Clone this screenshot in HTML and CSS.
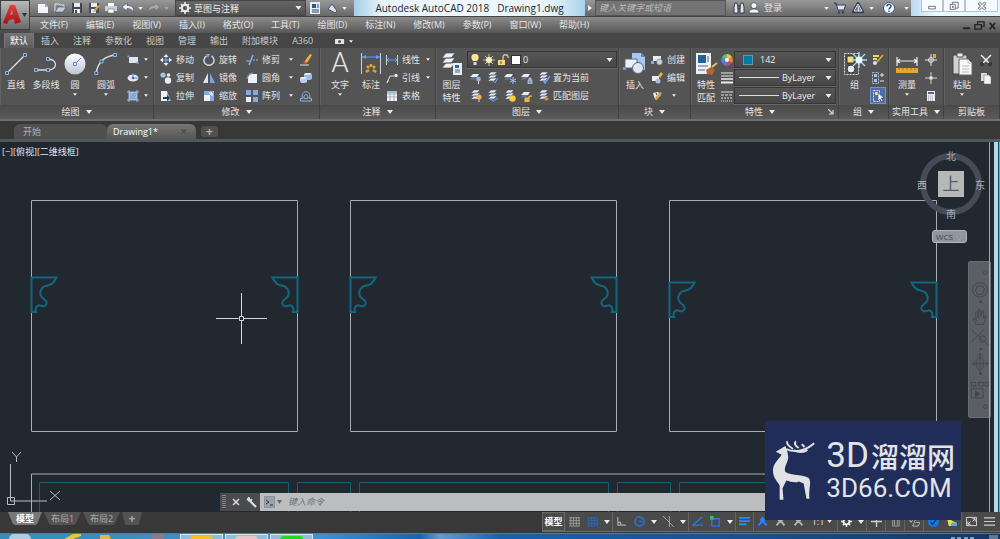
FILE: index.html
```html
<!DOCTYPE html>
<html lang="zh-CN">
<head>
<meta charset="utf-8">
<meta name="viewport" content="width=device-width, initial-scale=1">
<title>Autodesk AutoCAD 2018 - Drawing1.dwg</title>
<link rel="stylesheet" href="styles.css">
</head>
<body>
<svg class="sprite" aria-hidden="true">
  <defs>
    <linearGradient id="sphere" x1="0" y1="0" x2="0" y2="1"><stop offset="0" stop-color="#fff"/><stop offset="1" stop-color="#bcc5d2"/></linearGradient>
    <linearGradient id="red" x1="0" y1="0" x2="0" y2="1"><stop offset="0" stop-color="#e2403c"/><stop offset="1" stop-color="#a3121a"/></linearGradient>
    <path id="ornament" d="M0 .5H25C23 5 20 8 16 8.500C10 9.500 8 14 9 18C10 22 15 22 15.300 26C15 29 12 30 9 28.700C6 27.500 3 30 4.500 35H0Z"/>
  </defs>
  <symbol id="down" viewBox="0 0 6 4"><path d="M0 0h6L3 4z" fill="#eee"/></symbol>
  <symbol id="new" viewBox="0 0 12 12"><path d="M1 2h7l3 3v6H1z" fill="#f2f4f8"/><path d="M8 2v3h3z" fill="#aab"/></symbol>
  <symbol id="open" viewBox="0 0 12 12"><path d="M1 10V2h4l1 1h4v2" fill="none" stroke="#dce2ec"/><path d="M1 10l3-5h8l-3 5z" fill="#c3ccda" stroke="#33435c" stroke-width=".5"/></symbol>
  <symbol id="save" viewBox="0 0 12 12"><path d="M1 1h10v10H1z" fill="#3c4657"/><path d="M3 1h6v4H3zM3 7h6v4H3z" fill="#e7eaf0"/><path d="M4 8h2v3H4z" fill="#3c4657"/></symbol>
  <symbol id="saveas" viewBox="0 0 12 12"><path d="M1 1h10v10H1z" fill="#444e60"/><path d="M3 1h6v4H3zM3 7h5v4H3z" fill="#e7eaf0"/><path d="M5 9l5-6 1.500 1.500L7 10z" fill="#e5a337"/></symbol>
  <symbol id="print" viewBox="0 0 12 12"><path d="M3 1h6v3H3z" fill="#fff"/><path d="M0 4h12v5H0z" fill="#c9d0dc"/><path d="M3 7h6v4H3z" fill="#fff" stroke="#667" stroke-width=".6"/></symbol>
  <symbol id="undo" viewBox="0 0 12 12"><path d="M0 5l5-4v2.500c5 0 7 2 6.500 6.500C10 7.500 8 6.500 5 6.500V9z" fill="#eef2f8" stroke="#3a4458" stroke-width=".6"/></symbol>
  <symbol id="gear" viewBox="0 0 12 12"><circle cx="6" cy="6" r="3.200" fill="none" stroke="#eee" stroke-width="2"/><path d="M6 0v2.500M6 9.500V12M0 6h2.500M9.500 6H12M2 2l1.500 1.500M8.500 8.500L10 10M10 2L8.500 3.500M3.500 8.500L2 10" stroke="#eee" stroke-width="1.600"/></symbol>
  <symbol id="sheet" viewBox="0 0 12 12"><path d="M1 0h10v12H1z" fill="#e8edf5"/><path d="M3 2h4v4H3z" fill="#1f5e9e"/><path d="M8 3h2M8 5h2M3 8h7M3 10h7" stroke="#345"/></symbol>
  <symbol id="pen" viewBox="0 0 12 12"><path d="M2 7l4-5 5 7-2 2z" fill="#dfe5ee" stroke="#49546a"/></symbol>
  <symbol id="bino" viewBox="0 0 12 12"><path d="M1 11V5l1-4h2l1 4v6zM7 11V5l1-4h2l1 4v6zM5 4h2v3H5z" fill="#e4e8ef" stroke="#333d4f"/></symbol>
  <symbol id="user" viewBox="0 0 12 12"><circle cx="6" cy="3.600" r="3" fill="#f2f4f7" stroke="#39455a" stroke-width=".7"/><path d="M1 11c0-3 2-4 5-4s5 1 5 4z" fill="#f2f4f7" stroke="#39455a" stroke-width=".7"/></symbol>
  <symbol id="cart" viewBox="0 0 12 12"><path d="M0 1h2l2 7h6l1.500-5H3z" fill="#dce4ef" stroke="#34425a"/><circle cx="5" cy="10.500" r="1.200" fill="#34425a"/><circle cx="9" cy="10.500" r="1.200" fill="#34425a"/></symbol>
  <symbol id="a360" viewBox="0 0 12 12"><path d="M6 1L11 10H1z" fill="none" stroke="#33425b" stroke-width="2.500"/><path d="M6 2l4 7H2zM6 4l1 5" fill="none" stroke="#dfe8f4"/></symbol>
  <symbol id="help" viewBox="0 0 12 12"><circle cx="6" cy="6" r="5.500" fill="#fff" stroke="#345d94"/><path d="M4 4.500c0-3 4-2.500 4-.3C8 6 6 5.700 6 7.500M6 8.500V10" fill="none" stroke="#1d4d8c" stroke-width="1.400"/></symbol>
  <symbol id="camera" viewBox="0 0 12 8"><rect y="1" width="11" height="6" rx="1" fill="#e4e4e4"/><circle cx="5.500" cy="4" r="1.800" fill="#555"/></symbol>
  <symbol id="line" viewBox="0 0 24 24"><path d="M3 21L21 3" stroke="#ddd" stroke-width="1.300"/><path d="M1.500 19.500h3v3h-3zM19.500 1.500h3v3h-3z" fill="#40536e" stroke="#8fb4ea"/></symbol>
  <symbol id="pline" viewBox="0 0 24 24"><path d="M2 18h12c10 0 10-11 0-11" fill="none" stroke="#ddd" stroke-width="1.300"/><path d="M.5 16.500h3v3h-3zM12.500 16.500h3v3h-3zM12.500 5.500h3v3h-3z" fill="#40536e" stroke="#8fb4ea"/></symbol>
  <symbol id="circle" viewBox="0 0 24 24"><circle cx="12" cy="12" r="10.500" fill="url(#sphere)"/><path d="M12 12l6-6" stroke="#5a8bd8"/><path d="M10.500 10.500h3v3h-3z" fill="#eef" stroke="#5a8bd8"/></symbol>
  <symbol id="arc" viewBox="0 0 24 24"><path d="M2 21C4 10 10 4 22 3" fill="none" stroke="#ddd" stroke-width="1.300"/><path d="M.8 19.500h3v3h-3zM6 8h3v3H6zM19.500 1.500h3v3h-3z" fill="#40536e" stroke="#8fb4ea"/></symbol>
  <symbol id="rect" viewBox="0 0 12 12"><path d="M2 3h9v6H2z" fill="#dfe5ee"/><path d="M.5 1.500h2v2h-2zM9.500 8h2v2h-2z" fill="#6a9ae0"/></symbol>
  <symbol id="ellipse" viewBox="0 0 12 12"><ellipse cx="6" cy="6" rx="5.500" ry="3.500" fill="#e6eaf1"/><path d="M6 1v5h5" fill="none" stroke="#5c8edb"/><circle cx="6" cy="6" r="1.300" fill="#3668b5"/></symbol>
  <symbol id="hatch" viewBox="0 0 12 12"><path d="M2 2h8v8H2z" fill="#8fb2ea"/><path d="M2 0v12M10 0v12M0 2h12M0 10h12" stroke="#b9cbe8" stroke-width=".8"/><path d="M3 8l5-5M5 9l4-4" stroke="#547cbd" stroke-width=".6"/></symbol>
  <symbol id="move" viewBox="0 0 12 12"><path d="M6 0l2.500 3h-5zM6 12l2.500-3h-5zM0 6l3-2.500v5zM12 6L9 3.500v5z" fill="#e7ecf4"/><path d="M6 3v6M3 6h6" stroke="#6396e6" stroke-width="1.500"/></symbol>
  <symbol id="rotate" viewBox="0 0 12 12"><path d="M3.500 2A5 5 0 1 0 8.500 2" fill="none" stroke="#ccd4df" stroke-width="1.500"/><path d="M3 0h4L5 4z" fill="#77a5ec"/></symbol>
  <symbol id="trim" viewBox="0 0 12 12"><path d="M0 7h4M7 6h2M10 6h2" stroke="#9db4d4"/><path d="M3 11L7 1" stroke="#7fb0f4" stroke-width="1.500"/></symbol>
  <symbol id="erase" viewBox="0 0 12 12"><path d="M4 8L10 0l2 1-5 8z" fill="#eeaf43"/><path d="M3 8l3 3 1-2-2-2z" fill="#dc4b3b"/><path d="M0 11h9" stroke="#ddd"/></symbol>
  <symbol id="copy" viewBox="0 0 12 12"><circle cx="3" cy="3" r="2.600" fill="#a9c1e6"/><circle cx="8.500" cy="3" r="1.800" fill="#e8ecf2"/><circle cx="8" cy="8.500" r="3.200" fill="#e8ecf2"/></symbol>
  <symbol id="mirror" viewBox="0 0 12 12"><path d="M5 1v10H0z" fill="#dfe4ec"/><path d="M7 1v10h5z" fill="#7aa4df"/></symbol>
  <symbol id="fillet" viewBox="0 0 12 12"><path d="M2 11V7c0-4 2-5 5-5h4v9z" fill="#edf0f4"/><path d="M1 7c0-4 3-6 6-6" fill="none" stroke="#7aa8ed"/></symbol>
  <symbol id="solid" viewBox="0 0 12 12"><path d="M4 2l2-1h5l1 2v4l-2 1H7L4 6z" fill="#9dbbe5"/><path d="M4 2l2-1h5l-1 2H5z" fill="#dbe7f7"/><path d="M0 6l2-1h4l1 1v4l-2 1H1L0 9z" fill="#b7cdec"/><path d="M0 6l2-1h4L5 7H1z" fill="#e9f0fa"/></symbol>
  <symbol id="stretch" viewBox="0 0 12 12"><path d="M1 1h6v10H1z" fill="#edf0f5"/><path d="M7 1l4 10H7z" fill="#8db1e9"/><path d="M3 7h4V5l3 3-3 3V9H3z" fill="#203756"/></symbol>
  <symbol id="scale" viewBox="0 0 12 12"><path d="M1 1h10v10H1z" fill="#84aae3"/><path d="M1 5h6v6H1z" fill="#eef2f8"/><path d="M5 7l4-4M6 3h3v3" stroke="#fff" fill="none"/></symbol>
  <symbol id="array" viewBox="0 0 12 12"><path d="M0 0h5v5H0zM7 0h5v5H7zM7 7h5v5H7z" fill="#85aae2"/><path d="M0 7h5v5H0z" fill="#eef2f8"/></symbol>
  <symbol id="offset" viewBox="0 0 12 12"><path d="M.5 11h11V8.500H9.500c2.500-9-9.500-9-7 0H.5zM4 8.500c-1-5 5-5 4 0z" fill="none" stroke="#92aed8"/></symbol>
  <symbol id="dim" viewBox="0 0 24 24"><path d="M2.500 1v21M21.500 1v21" stroke="#ccd2da"/><path d="M3 5h18" stroke="#5c9bff"/><path d="M3 5l4-2v4zM21 5l-4-2v4z" fill="#5c9bff"/><path d="M7 20l3-2M17 20l-3-2M8 14l2 2M16 14l-2 2M12 12v3" stroke="#e5a32e" stroke-width="2.500"/></symbol>
  <symbol id="linear" viewBox="0 0 12 12"><path d="M.5 1v10M11.500 1v10" stroke="#ccd2da"/><path d="M1 6h10M3 4L1 6l2 2M9 4l2 2-2 2" fill="none" stroke="#5c9bff"/></symbol>
  <symbol id="leader" viewBox="0 0 12 12"><path d="M1 11L4 4h4" fill="none" stroke="#ddd"/><path d="M0 11l2-3 1 1z" fill="#ddd"/><circle cx="10" cy="3.500" r="1.700" fill="#eee"/></symbol>
  <symbol id="table" viewBox="0 0 12 12"><path d="M1 1h10v10H1z" fill="#f4f6f8"/><path d="M1 4h10M1 7h10M4 1v10M8 1v10" stroke="#8390a5" stroke-width=".7"/><path d="M1 1h10v2H1z" fill="#9eb7de"/></symbol>
  <symbol id="stack" viewBox="0 0 24 24"><path d="M2 6l4-5h9l-4 5zM2 11l4-5h9l-4 5zM2 16l4-5h9l-4 5z" fill="#eff1f4" stroke="#46505f" stroke-width=".7"/><path d="M13 11h9v12h-9z" fill="#e9eef6"/><path d="M15 13h4v3h-4z" fill="#2c66ac"/><path d="M15 18h5M15 20h5" stroke="#4c6079"/></symbol>
  <symbol id="bulb" viewBox="0 0 12 12"><path d="M6 0c-5 0-4 5-2 7h4c2-2 3-7-2-7z" fill="#ffe391"/><path d="M4.500 8h3v3h-3z" fill="#dadde2"/></symbol>
  <symbol id="sun" viewBox="0 0 12 12"><path d="M6 0v12M0 6h12M2 2l8 8M10 2l-8 8" stroke="#c9c6ae"/><circle cx="6" cy="6" r="3" fill="#fff0b0"/></symbol>
  <symbol id="lock" viewBox="0 0 12 12"><path d="M6 6V3c0-3 5-3 5 0v1" fill="none" stroke="#d8c77c" stroke-width="1.300"/><path d="M1 6h7v5H1z" fill="#f2d979"/><path d="M4 7v3" stroke="#705820"/></symbol>
  <symbol id="lay" viewBox="0 0 12 12"><path d="M0 5l3-3h6L7 5z" fill="#e9edf2"/><path d="M0 7.500L2 5h5L5 7.500z" fill="#647792"/></symbol>
  <symbol id="lays" viewBox="0 0 12 12"><path d="M1 3l3-3h6L7 3zM1 6l3-3h6L7 6zM1 9l3-3h6L7 9z" fill="#e9edf2" stroke="#4c607b" stroke-width=".6"/></symbol>
  <symbol id="insert" viewBox="0 0 24 24"><path d="M9 1h9l4 4v13H9z" fill="#a8c8f0"/><path d="M18 1v4h4z" fill="#5c86bb"/><path d="M2 7h12v9H2z" fill="#eef1f5" stroke="#5c6b80"/><circle cx="15" cy="16" r="5.500" fill="#dfe6ef" stroke="#5a6679"/><path d="M0 15h3v3H0z" fill="#5c9bff"/></symbol>
  <symbol id="create" viewBox="0 0 12 12"><path d="M2 2h8v5H2z" fill="#e6ecf5"/><circle cx="8.500" cy="8" r="3" fill="#c5cfde" stroke="#4f6078" stroke-width=".5"/><path d="M0 7h3v3H0z" fill="#7cabf1"/></symbol>
  <symbol id="edit" viewBox="0 0 12 12"><path d="M1 4h7v5H1z" fill="#e6ecf5"/><circle cx="7" cy="9" r="2.500" fill="#a9bddb"/><path d="M7 4l3-4 2 2-3 4z" fill="#e7ae42"/></symbol>
  <symbol id="attr" viewBox="0 0 12 12"><path d="M2 3c1 3 1 5 3 7l5-5-3-3z" fill="#e7eaee"/><path d="M4 8l5-6 2 1-5 7z" fill="#d9a13b"/><path d="M5 3l1 2" stroke="#333"/></symbol>
  <symbol id="match" viewBox="0 0 24 24"><path d="M2 1h15v21H2z" fill="#edf1f6"/><path d="M4 3h8v8H4z" fill="#245f9e"/><path d="M14 4v6M4 14h10M4 18h7" stroke="#55657a"/><path d="M12 18l5-3 4 3-3 5-5-1z" fill="#b26827"/><path d="M18 15l5-4" stroke="#e9c069" stroke-width="2"/></symbol>
  <symbol id="wheel" viewBox="0 0 12 12"><path d="M6 6V0a6 6 0 0 1 5 3z" fill="#f3c833"/><path d="M6 6l5-3a6 6 0 0 1 0 6z" fill="#ec8137"/><path d="M6 6l5 3a6 6 0 0 1-5 3z" fill="#d3405c"/><path d="M6 6v6a6 6 0 0 1-5-3z" fill="#7b63cf"/><path d="M6 6L1 9a6 6 0 0 1 0-6z" fill="#3e8fe0"/><path d="M6 6L1 3a6 6 0 0 1 5-3z" fill="#6bc060"/><circle cx="6" cy="6" r="2" fill="#f5f5f5"/></symbol>
  <symbol id="lweight" viewBox="0 0 12 12"><path d="M0 1h12M0 4h12" stroke="#eee"/><path d="M0 7h12" stroke="#eee" stroke-width="1.500"/><path d="M0 10.500h12" stroke="#eee" stroke-width="2"/></symbol>
  <symbol id="ltype" viewBox="0 0 12 12"><path d="M0 2h12" stroke="#ddd"/><path d="M0 5h12" stroke="#ddd" stroke-dasharray="3 1"/><path d="M0 8h12" stroke="#ddd" stroke-dasharray="2 1"/><path d="M0 11h12" stroke="#ddd" stroke-dasharray="1 1"/></symbol>
  <symbol id="group" viewBox="0 0 24 24"><path d="M1.500 1.500h14v21h-14z" fill="none" stroke="#ddd" stroke-dasharray="2 1"/><path d="M4 4h7v7H4z" fill="#f2e07b" stroke="#333"/><circle cx="8" cy="17" r="4" fill="#e8edf4" stroke="#333"/><path d="M16 0v16M8 8h16M10 2l12 12M22 2L10 14" stroke="#a7d8ff" stroke-width="1.400"/><circle cx="16" cy="8" r="3.500" fill="#eaf7ff"/></symbol>
  <symbol id="gedit" viewBox="0 0 12 12"><path d="M1 2h6M1 5h4" stroke="#eed878" stroke-width="2"/><circle cx="3" cy="9" r="2" fill="#d9e2ee"/><path d="M5 8l6-7" stroke="#e8a637" stroke-width="1.700"/></symbol>
  <symbol id="ungroup" viewBox="0 0 12 12"><path d="M.5.500h6v11h-6z" fill="none" stroke="#a8bad3" stroke-dasharray="2 1"/><path d="M2 2h3v3H2zM2 7h3v3H2z" fill="#a9c3e9"/><path d="M8 3h4M10 1v4M8 9h4" stroke="#e4e8ed"/></symbol>
  <symbol id="gsel" viewBox="0 0 12 12"><path d="M1.500.500h6v11h-6z" fill="none" stroke="#d1e0fb" stroke-dasharray="2 1"/><path d="M3 2h3v3H3z" fill="#f0df7f"/><path d="M6 3v8l2-2 2 3 1-1-2-3h3z" fill="#fff" stroke="#243d69" stroke-width=".5"/></symbol>
  <symbol id="measure" viewBox="0 0 24 24"><path d="M2 5v9M22 5v9M2 9h20M5 7L2 9l3 2M19 7l3 2-3 2" fill="none" stroke="#e8ebef" stroke-width="1.200"/><path d="M1 16h22v5H1z" fill="#e6a82d"/><path d="M4 16v2M8 16v2M12 16v2M16 16v2M20 16v2" stroke="#a9741c"/></symbol>
  <symbol id="idp" viewBox="0 0 12 12"><path d="M6 0v12M0 6h12" stroke="#e3e6eb"/><circle cx="6" cy="6" r="2.500" fill="none" stroke="#e3e6eb"/><path d="M8 0h3v4H8z" fill="#e6a847"/></symbol>
  <symbol id="point" viewBox="0 0 12 12"><path d="M6 0v12M0 6h12" stroke="#cbd2dc"/><path d="M4.500 4.500h3v3h-3z" fill="#e6e8ec"/></symbol>
  <symbol id="calc" viewBox="0 0 12 12"><path d="M2 1h8v10H2z" fill="#eef0f3"/><path d="M3 2h6v2H3z" fill="#576578"/><path d="M3 6h6M3 8h6M3 10h6" stroke="#7d8998" stroke-dasharray="1 1"/></symbol>
  <symbol id="paste" viewBox="0 0 24 24"><path d="M3 3h14v19H3z" fill="#cfd1d4" stroke="#424242"/><path d="M7 1h6v4H7z" fill="#e8e8e8" stroke="#555"/><path d="M9 7h9l4 4v12H9z" fill="#f7f7f7" stroke="#676767"/><path d="M18 7v4h4M12 14h7M12 17h7M12 20h7" fill="none" stroke="#b6bbc3"/></symbol>
  <symbol id="cut" viewBox="0 0 12 12"><path d="M1 1l8 8M11 1L3 9" stroke="#f3f3f3" stroke-width="1.500"/><circle cx="2" cy="10" r="1.500" fill="none" stroke="#222"/><circle cx="10" cy="10" r="1.500" fill="none" stroke="#222"/></symbol>
  <symbol id="cclip" viewBox="0 0 12 12"><path d="M1 1h6v8H1z" fill="#ddd"/><path d="M4 3h5l2 2v7H4z" fill="#f6f6f6" stroke="#666" stroke-width=".5"/></symbol>
  <symbol id="person" viewBox="0 0 14 14"><path d="M7 1v5L2 12M7 6l5 6M4 6l3-3 3 3" fill="none" stroke="currentColor" stroke-width="2.400"/></symbol>
</svg>

<div class="app">
  <header class="top">
    <button class="logo" aria-label="应用程序菜单">
      <svg width="18" height="22" viewBox="0 0 18 22"><path d="M0 19L7 1h5l6 17-6 2-1-5-5 1-2 4zM7 11l3-1-1-4z" fill="url(#red)"/></svg>
      <svg class="dark" width="5" height="4"><path d="M0 0h5L2.500 4z"/></svg>
    </button>
    <div class="titlebar">
      <div class="qat">
        <button aria-label="新建"><svg><use href="#new"/></svg></button>
        <button aria-label="打开"><svg><use href="#open"/></svg></button>
        <button aria-label="保存"><svg><use href="#save"/></svg></button>
        <button aria-label="另存为"><svg><use href="#saveas"/></svg></button>
        <button aria-label="打印"><svg><use href="#print"/></svg></button>
        <button aria-label="放弃"><svg><use href="#undo"/></svg></button>
        <button class="arrow" aria-label="放弃列表"><svg><use href="#down"/></svg></button>
        <button class="dim" aria-label="重做"><svg class="flip"><use href="#undo"/></svg></button>
        <button class="arrow dim" aria-label="重做列表"><svg><use href="#down"/></svg></button>
      </div>
      <div class="workspace"><svg><use href="#gear"/></svg><select aria-label="工作空间"><option>草图与注释</option></select><svg class="tri"><use href="#down"/></svg></div>
      <div class="qat tail">
        <button aria-label="图纸集"><svg><use href="#sheet"/></svg></button>
        <button aria-label="特性"><svg><use href="#pen"/></svg></button>
        <button class="arrow" aria-label="自定义"><svg><use href="#down"/></svg></button>
      </div>
      <h1 class="caption"><span>Autodesk AutoCAD 2018</span><span>Drawing1.dwg</span></h1>
      <button class="expand" aria-label="展开"><svg width="4" height="6"><path d="M0 0v6l4-3z" fill="#eee"/></svg></button>
      <input class="search" type="search" aria-label="搜索" placeholder="键入关键字或短语">
      <div class="account">
        <button aria-label="搜索"><svg><use href="#bino"/></svg></button>
        <button class="login"><svg><use href="#user"/></svg>登录</button>
        <button class="arrow" aria-label="登录菜单"><svg><use href="#down"/></svg></button>
        <button aria-label="应用商店"><svg><use href="#cart"/></svg></button>
        <button aria-label="保持连接"><svg><use href="#a360"/></svg></button>
        <button class="arrow" aria-label="连接菜单"><svg><use href="#down"/></svg></button>
        <button class="help" aria-label="帮助"><svg><use href="#help"/></svg></button>
        <button class="arrow" aria-label="帮助菜单"><svg><use href="#down"/></svg></button>
      </div>
      <div class="winctl">
        <button aria-label="最小化"><svg viewBox="0 0 12 12"><path d="M2 6.500h8v3H2z" fill="#fff" stroke="#555d68"/></svg></button>
        <button aria-label="还原"><svg viewBox="0 0 12 12"><path d="M4 1.500h7v7H4z" fill="#fff" stroke="#555d68"/><path d="M1.500 4h6v6h-6z" fill="#fff" stroke="#555d68"/><path d="M3.500 6h2v2h-2z" fill="#555d68"/></svg></button>
        <button class="wide" aria-label="关闭"><svg viewBox="0 0 12 12"><path d="M2 2l8 8M10 2l-8 8" stroke="#555d68" stroke-width="3.500"/><path d="M2.500 2.500l7 7M9.500 2.500l-7 7" stroke="#fff" stroke-width="1.700"/></svg></button>
      </div>
    </div>
    <nav class="menubar">
      <button>文件(F)</button><button>编辑(E)</button><button>视图(V)</button><button>插入(I)</button><button>格式(O)</button><button>工具(T)</button><button>绘图(D)</button><button>标注(N)</button><button>修改(M)</button><button>参数(P)</button><button>窗口(W)</button><button>帮助(H)</button>
      <div class="docctl">
        <button aria-label="最小化图形"><svg viewBox="0 0 12 12"><path d="M2 9h8" stroke="#222" stroke-width="2"/></svg></button>
        <button aria-label="还原图形"><svg viewBox="0 0 12 12"><path d="M4 4V2h7v5H9M1 5h7v5H1z" fill="none" stroke="#222" stroke-width="1.500"/></svg></button>
        <button aria-label="关闭图形"><svg viewBox="0 0 12 12"><path d="M3 3l6 7M9 3l-6 7" stroke="#222" stroke-width="1.800"/></svg></button>
      </div>
    </nav>
  </header>

  <nav class="tabs">
    <button class="on">默认</button><button>插入</button><button>注释</button><button>参数化</button><button>视图</button><button>管理</button><button>输出</button><button>附加模块</button><button>A360</button>
    <button class="cam" aria-label="功能区显示"><svg class="camera"><use href="#camera"/></svg><svg class="mini"><use href="#down"/></svg></button>
  </nav>

  <main class="ribbon">
    <section class="panel">
      <div class="body draw">
        <button class="big"><svg><use href="#line"/></svg>直线</button>
        <button class="big"><svg><use href="#pline"/></svg>多段线</button>
        <button class="big"><svg><use href="#circle"/></svg>圆<svg class="mini"><use href="#down"/></svg></button>
        <button class="big"><svg><use href="#arc"/></svg>圆弧<svg class="mini"><use href="#down"/></svg></button>
        <div class="rows">
          <button class="tool" aria-label="矩形"><svg><use href="#rect"/></svg><svg class="mini"><use href="#down"/></svg></button>
          <button class="tool" aria-label="椭圆"><svg><use href="#ellipse"/></svg><svg class="mini"><use href="#down"/></svg></button>
          <button class="tool" aria-label="图案填充"><svg><use href="#hatch"/></svg><svg class="mini"><use href="#down"/></svg></button>
        </div>
      </div>
      <h2>绘图<svg><use href="#down"/></svg></h2>
    </section>
    <section class="panel">
      <div class="body modify">
        <div class="rows"><button class="tool"><svg><use href="#move"/></svg>移动</button><button class="tool"><svg><use href="#copy"/></svg>复制</button><button class="tool"><svg><use href="#stretch"/></svg>拉伸</button></div>
        <div class="rows"><button class="tool"><svg><use href="#rotate"/></svg>旋转</button><button class="tool"><svg><use href="#mirror"/></svg>镜像</button><button class="tool"><svg><use href="#scale"/></svg>缩放</button></div>
        <div class="rows"><button class="tool"><svg><use href="#trim"/></svg>修剪<svg class="mini"><use href="#down"/></svg></button><button class="tool"><svg><use href="#fillet"/></svg>圆角<svg class="mini"><use href="#down"/></svg></button><button class="tool"><svg><use href="#array"/></svg>阵列<svg class="mini"><use href="#down"/></svg></button></div>
        <div class="rows"><button class="tool" aria-label="删除"><svg><use href="#erase"/></svg></button><button class="tool" aria-label="分解"><svg><use href="#solid"/></svg></button><button class="tool" aria-label="偏移"><svg><use href="#offset"/></svg></button></div>
      </div>
      <h2>修改<svg><use href="#down"/></svg></h2>
    </section>
    <section class="panel">
      <div class="body note">
        <button class="big"><span class="glyph">A</span>文字<svg class="mini"><use href="#down"/></svg></button>
        <button class="big"><svg><use href="#dim"/></svg>标注</button>
        <div class="rows"><button class="tool"><svg><use href="#linear"/></svg>线性<svg class="mini"><use href="#down"/></svg></button><button class="tool"><svg><use href="#leader"/></svg>引线<svg class="mini"><use href="#down"/></svg></button><button class="tool"><svg><use href="#table"/></svg>表格</button></div>
      </div>
      <h2>注释<svg><use href="#down"/></svg></h2>
    </section>
    <section class="panel">
      <div class="body layer">
        <button class="big"><svg><use href="#stack"/></svg>图层<br>特性</button>
        <div class="rows">
          <div class="combo"><svg><use href="#bulb"/></svg><svg><use href="#sun"/></svg><svg><use href="#lock"/></svg><i class="swatch white"></i><select aria-label="图层"><option>0</option></select><svg class="tri"><use href="#down"/></svg></div>
          <div class="strip">
            <button class="tool" aria-label="关"><svg viewBox="0 0 12 12"><use href="#lay" width="12" height="12"/><circle cx="8.500" cy="7" r="2.300" fill="#93b9ef"/><path d="M8.500 9v3" stroke="#ddd"/></svg></button>
            <button class="tool" aria-label="隔离"><svg viewBox="0 0 12 12"><use href="#lays" width="12" height="12"/><path d="M6 9l2 2 3-5" fill="none" stroke="#73a8f5"/></svg></button>
            <button class="tool" aria-label="冻结"><svg viewBox="0 0 12 12"><use href="#lay" width="12" height="12"/><path d="M9 5v7M6 7l6 3M12 7l-6 3" stroke="#9dc6fb"/></svg></button>
            <button class="tool" aria-label="锁定"><svg viewBox="0 0 12 12"><use href="#lay" width="12" height="12"/><path d="M7 8h4v4H7zM8 8V6h2v2" fill="#829ab8" stroke="#b8cdeb" stroke-width=".7"/></svg></button>
            <button class="tool text"><svg viewBox="0 0 12 12"><use href="#lays" width="12" height="12"/><path d="M5 8l2 3 5-7" fill="none" stroke="#6fa0e5" stroke-width="1.500"/></svg>置为当前</button>
          </div>
          <div class="strip">
            <button class="tool" aria-label="打开图层"><svg viewBox="0 0 12 12"><use href="#lays" width="12" height="12"/><circle cx="9" cy="7" r="2.500" fill="#f0b24c"/><path d="M9 9v3" stroke="#ddd"/></svg></button>
            <button class="tool" aria-label="取消隔离"><svg viewBox="0 0 12 12"><use href="#lays" width="12" height="12"/><path d="M3 9l3 2 5-3" fill="none" stroke="#4e84d6" stroke-width="1.800"/></svg></button>
            <button class="tool" aria-label="解冻"><svg viewBox="0 0 12 12"><use href="#lays" width="12" height="12"/><circle cx="8.500" cy="8.500" r="3.200" fill="#f5c944"/></svg></button>
            <button class="tool" aria-label="解锁"><svg viewBox="0 0 12 12"><use href="#lay" width="12" height="12"/><path d="M4 8h4v4H4zM8 8V6h3" fill="#e9b73e" stroke="#e9b73e"/></svg></button>
            <button class="tool text"><svg viewBox="0 0 12 12"><use href="#lays" width="12" height="12"/><path d="M5 8l3 3 3-2-2-2z" fill="#d4843b"/></svg>匹配图层</button>
          </div>
        </div>
      </div>
      <h2>图层<svg><use href="#down"/></svg></h2>
    </section>
    <section class="panel">
      <div class="body block">
        <button class="big"><svg><use href="#insert"/></svg>插入</button>
        <div class="rows"><button class="tool"><svg><use href="#create"/></svg>创建</button><button class="tool"><svg><use href="#edit"/></svg>编辑</button><button class="tool" aria-label="编辑属性"><svg><use href="#attr"/></svg><svg class="mini"><use href="#down"/></svg></button></div>
      </div>
      <h2>块<svg><use href="#down"/></svg></h2>
    </section>
    <section class="panel">
      <div class="body props">
        <button class="big"><svg><use href="#match"/></svg>特性<br>匹配</button>
        <div class="rows">
          <div class="prop"><svg><use href="#wheel"/></svg><div class="combo"><i class="swatch teal"></i><select aria-label="对象颜色"><option>142</option></select><svg class="tri"><use href="#down"/></svg></div></div>
          <div class="prop"><svg><use href="#lweight"/></svg><div class="combo"><i class="rule"></i><select class="fit" aria-label="线宽"><option>ByLayer</option></select><svg class="tri"><use href="#down"/></svg></div></div>
          <div class="prop"><svg><use href="#ltype"/></svg><div class="combo"><i class="rule"></i><select class="fit" aria-label="线型"><option>ByLayer</option></select><svg class="tri"><use href="#down"/></svg></div></div>
        </div>
      </div>
      <h2 class="launch"><span>特性</span><svg><use href="#down"/></svg><button aria-label="特性选项板"><svg viewBox="0 0 6 6"><path d="M0 0l4 4M5 1v4H1" fill="none" stroke="#ddd" stroke-width="1.200"/></svg></button></h2>
    </section>
    <section class="panel">
      <div class="body grp">
        <button class="big"><svg><use href="#group"/></svg>组</button>
        <div class="rows"><button class="tool" aria-label="组编辑"><svg><use href="#gedit"/></svg></button><button class="tool" aria-label="解除编组"><svg><use href="#ungroup"/></svg></button><button class="tool on" aria-label="组选择"><svg><use href="#gsel"/></svg></button></div>
      </div>
      <h2>组<svg><use href="#down"/></svg></h2>
    </section>
    <section class="panel">
      <div class="body util">
        <button class="big"><svg><use href="#measure"/></svg>测量<svg class="mini"><use href="#down"/></svg></button>
        <div class="rows"><button class="tool" aria-label="点坐标"><svg><use href="#idp"/></svg></button><button class="tool" aria-label="点样式"><svg><use href="#point"/></svg></button><button class="tool" aria-label="计算器"><svg><use href="#calc"/></svg></button></div>
      </div>
      <h2>实用工具<svg><use href="#down"/></svg></h2>
    </section>
    <section class="panel">
      <div class="body util">
        <button class="big"><svg><use href="#paste"/></svg>粘贴<svg class="mini"><use href="#down"/></svg></button>
        <div class="rows"><button class="tool" aria-label="剪切"><svg><use href="#cut"/></svg></button><button class="tool" aria-label="复制到剪贴板"><svg><use href="#cclip"/></svg></button></div>
      </div>
      <h2>剪贴板</h2>
    </section>
  </main>

  <nav class="files">
    <button class="file start">开始</button>
    <button class="file on">Drawing1*<span>✕</span></button>
    <button class="file add" aria-label="新图形">+</button>
  </nav>

  <div class="stage">
    <div class="canvas">
      <svg class="drawing" aria-hidden="true">
        <g transform="translate(0 -142)" fill="none">
          <g stroke="#a9adb3">
            <path d="M31.500 200.500h266v231h-266zM350.500 200.500h266v231h-266zM669.500 200.500h267v231h-267zM31.500 520v-46h905"/>
          </g>
          <path d="M39.500 520v-37.500h249V520M297.500 520v-37.500h53V520M359.500 520v-37.500h249V520M617.500 520v-37.500h53V520M679.500 520v-37.500h249" stroke="#156074"/>
          <g stroke="#12677f" stroke-width="2">
            <use href="#ornament" x="31.500" y="277"/><use href="#ornament" x="350.500" y="277"/><use href="#ornament" x="669.500" y="282"/>
            <use href="#ornament" transform="translate(297.500 277) scale(-1 1)"/><use href="#ornament" transform="translate(616.500 277) scale(-1 1)"/><use href="#ornament" transform="translate(936.500 282) scale(-1 1)"/>
          </g>
          <path d="M216 318.500h22.500M243.500 318.500H267M241.500 293v23M241.500 321v23M239.500 316.500h4v4h-4z" stroke="#d5d7da"/>
          <path d="M7.500 497.500h7v7h-7zM10.500 464v37H47M12 452l4.500 5 4.500-5M16.500 457v5M50 491l10 9M60 491l-10 9" stroke="#b9bcc1"/>
        </g>
      </svg>
      <div class="viewlabel">[−][俯视][二维线框]</div>
      <svg class="cube" width="70" height="76" viewBox="916 147 70 76">
        <circle cx="951" cy="184" r="28" fill="none" stroke="#454c57" stroke-width="6"/>
        <path d="M938 171h26v26h-26z" fill="#b5b7b9"/>
        <g text-anchor="middle" fill="#adb1b7" font-size="10"><text x="951" y="160">北</text><text x="951" y="218">南</text><text x="922" y="189">西</text><text x="980" y="189">东</text><text x="951" y="190" font-size="17" fill="#555c62">上</text></g>
      </svg>
      <button class="wcs">WCS <span>▽</span></button>
      <div class="navbar">
        <svg width="23" height="155" viewBox="968 261 23 155" fill="none" stroke="#41464c"><circle cx="986" cy="265" r="2"/><circle cx="980" cy="284" r="8"/><path d="M977 280h6l2 3-2 6h-6l-2-4z"/><path d="M979 297h3M979 349h3M979 376h3" stroke-width="2"/><path d="M976 322l-4-6 2-1 2 3-1-9 2-1 1 7V306h2l1 8 1-7h2v9l2-4 1 1-3 9zM971 328l15 14M985 327l-14 14"/><circle cx="983" cy="338" r="3.500"/><path d="M986 341l3 4M980 354v22M972 365h17M977 357l3-3 3 3M975 362l-3 3 3 3M986 362l3 3-3 3"/><ellipse cx="980" cy="365" rx="4" ry="7"/><path d="M970.500 385.500h5v4h-5zM978.500 385.500h5v4h-5zM985.500 385.500h4v4h-4zM970.500 392.500h13v10h-13z"/><path d="M975 395l5 3-5 3z" fill="#41464c"/><circle cx="986" cy="412" r="2"/></svg>
      </div>
      <div class="frameline"></div>
      <div class="command">
        <div class="grip"></div>
        <button aria-label="关闭命令行"><svg viewBox="0 0 12 12"><path d="M3 3l6 6M9 3L3 9" stroke="#ddd" stroke-width="1.500"/></svg></button>
        <button aria-label="自定义命令行"><svg viewBox="0 0 12 12"><path d="M3 4l7 7" stroke="#ddd" stroke-width="2.200"/><path d="M1 3c1 3 5 3 5 0L4 4 3 1z" fill="#ddd" stroke="#ddd"/></svg></button>
        <div class="entry">
          <svg class="prompt" width="18" height="12"><path d="M.5.500h10v11H.5z" fill="#9aa3ae" stroke="#8a929d"/><path d="M2 4l3 2-3 2M6 9h3" fill="none" stroke="#333"/><path d="M13 4h5l-2.500 4z" fill="#666"/></svg>
          <input type="text" aria-label="命令" placeholder="键入命令">
        </div>
      </div>
    </div>
    <div class="edge"></div>
  </div>

  <footer class="bottom">
    <div class="layouts"><button class="on">模型</button><button>布局1</button><button>布局2</button><button class="plus" aria-label="新建布局">+</button></div>
    <div class="status">
      <button class="model">模型</button>
      <button aria-label="栅格"><svg viewBox="0 0 12 12"><path d="M2 1v10M5 1v10M8 1v10M11 1v10M0 2h12M0 5h12M0 8h12M0 11h12" stroke="#aaa" stroke-width=".8"/></svg></button>
      <button aria-label="捕捉"><svg viewBox="0 0 12 12"><path d="M2 1v10M5 1v10M8 1v10M11 1v10M0 2h12M0 5h12M0 8h12M0 11h12" stroke="#2869ba"/></svg></button>
      <button class="drop" aria-label="捕捉选项"><svg><use href="#down"/></svg></button>
      <button class="sep" aria-label="正交"><svg viewBox="0 0 12 12"><path d="M2 1v9h9M2 7h3v3" fill="none" stroke="#aaa" stroke-width="1.300"/></svg></button>
      <button aria-label="极轴"><svg viewBox="0 0 12 12"><circle cx="6" cy="6" r="5" fill="none" stroke="#2a6fd0" stroke-width="1.800"/><path d="M6 6h6M6 6l3-4" stroke="#2a6fd0"/></svg></button>
      <button class="drop" aria-label="极轴选项"><svg><use href="#down"/></svg></button>
      <button aria-label="等轴测"><svg viewBox="0 0 12 12"><path d="M0 0l12 12M7 0v12" stroke="#aaa"/></svg></button>
      <button class="drop" aria-label="等轴测选项"><svg><use href="#down"/></svg></button>
      <button class="sep" aria-label="对象追踪"><svg viewBox="0 0 12 12"><path d="M11 1L1 10h11" fill="none" stroke="#2777e6" stroke-width="1.500"/></svg></button>
      <button aria-label="对象捕捉"><svg viewBox="0 0 12 12"><path d="M2 3h8v8H2z" fill="none" stroke="#2777e6" stroke-width="1.500"/><path d="M0 0h4v4H0z" fill="#2ec050"/></svg></button>
      <button class="drop" aria-label="捕捉设置"><svg><use href="#down"/></svg></button>
      <button class="sep" aria-label="线宽显示"><svg viewBox="0 0 12 12"><path d="M0 2h12M0 5.500h12M0 9h8" stroke="#2f86fa" stroke-width="2"/></svg></button>
      <button class="sep blue" aria-label="注释可见性"><svg><use href="#person"/></svg></button>
      <button class="gray" aria-label="自动缩放"><svg><use href="#person"/></svg></button>
      <button class="gray" aria-label="注释比例"><svg><use href="#person"/></svg></button>
      <button class="ratio">1:1<svg class="mini"><use href="#down"/></svg></button>
      <button class="sep" aria-label="切换工作空间"><svg><use href="#gear"/></svg></button>
      <button class="drop" aria-label="工作空间列表"><svg><use href="#down"/></svg></button>
      <button class="sep far" aria-label="注释监视器"><svg viewBox="0 0 12 12"><path d="M6 0v12M0 6h12" stroke="#ccc" stroke-width="1.500"/></svg></button>
      <button class="sep far" aria-label="隔离对象"><svg viewBox="0 0 12 12"><path d="M3 2h7v9H3zM5 4v6M8 4v6" fill="none" stroke="#aaa"/></svg></button>
      <button class="sep far" aria-label="系统变量"><svg viewBox="0 0 12 12"><path d="M0 3h5l-3 4zM7 7h5l-2 4H4l3-7h4" fill="none" stroke="#bbb"/></svg></button>
      <button class="sep far" aria-label="硬件加速"><svg viewBox="0 0 12 12"><circle cx="6" cy="6" r="6" fill="#1677e5"/><path d="M3 7l2 2 4-5" fill="none" stroke="#103a75" stroke-width="1.500"/></svg></button>
      <button class="far" aria-label="性能"><svg viewBox="0 0 12 12"><path d="M1 2l5-1v4l5 2-2 4H3z" fill="#dde05b"/><path d="M6 7h6v4H5z" fill="#5ba4df"/></svg></button>
      <button class="sep far" aria-label="全屏显示"><svg viewBox="0 0 12 12"><path d="M.5 1.500h11v9H.5z" fill="none" stroke="#ddd"/><path d="M7 3h3v3M10 3L7 6M5 9H2V6M2 9l3-3" fill="none" stroke="#ddd"/></svg></button>
      <button class="far" aria-label="自定义"><svg viewBox="0 0 12 12"><path d="M0 2h12M0 6h12M0 10h12" stroke="#ccc" stroke-width="1.200"/></svg></button>
    </div>
  </footer>

  <div class="taskbar" aria-hidden="true">
    <i class="orb"></i>
    <svg class="quick" width="110" height="5"><path d="M2 5l9-5h8v2l-8 3z" fill="#e3c838"/><path d="M38 1h9l2 4H38z" fill="#e4b743"/><path d="M90 0h12v5H90z" fill="#8b7a8c"/></svg>
    <i class="task"><b class="yellow"></b></i><i class="task"><b class="rose"></b></i><i class="task"><b class="green"></b></i>
    <svg class="clock" width="50" height="5"><path d="M1 4h4M7 4h4M14 4h4M20 4h4" stroke="#fff"/><path d="M39 1h9v4h-9z" fill="#66798f"/></svg>
  </div>

  <aside class="brand">
    <svg width="46" height="62" viewBox="0 0 48 62" aria-hidden="true"><path d="M4 11L14 5l2 5 1 7c-1 7-5 10-3 15 7 4 15 2 24 6 4 4 0 11 1 22h-3l-3-16-5-2c-4 2-9 0-13-1l-4 8 1 12H8V46C5 41 1 38 1 30c0-7 7-12 9-16z" fill="#e1e2e5"/><path d="M15 8c7 4 19 3 29-6M22 8c-5-3-7-6-6-8M28 7c-4-2-5-5-3-7M23 9c4 3 10 3 14 0M34 6l-3-3" fill="none" stroke="#e1e2e5" stroke-width="2"/></svg>
    <div><p class="name"><b>3D</b>溜溜网</p><p class="site">3D66.COM</p></div>
  </aside>
</div>
</body>
</html>
```
FILE: styles.css
```css
* { box-sizing: border-box; }
body { margin: 0; background: #383838; }
.app, button, input, select { font-family: "Open Sans", "Noto Sans CJK SC", sans-serif; font-size: 9px; line-height: 12px; color: #e4e4e4; }
.app { position: relative; display: flex; flex-direction: column; height: 100vh; overflow: hidden; }
button { display: flex; align-items: center; justify-content: center; flex: none; margin: 0; padding: 0; border: 0; background: none; white-space: nowrap; }
select { appearance: none; flex: 1; min-width: 0; height: 13px; padding: 0; border: 0; background: none; color: #eee; line-height: 13px; }
h1, h2, p { margin: 0; font-weight: 400; }
svg { flex: none; display: block; }
button svg, .combo svg, .prop > svg, .workspace svg { width: 12px; height: 12px; }
.sprite { position: absolute; width: 0; height: 0; }
button .mini { width: 4px; height: 3px; }
.tri.tri { width: 7px; height: 4px; }

.top { display: grid; grid-template-columns: 30px 1fr; background: linear-gradient(#7b7b7b, #4b4b4b); flex: none; }
.logo { grid-row: span 2; height: 30px; gap: 1px; align-items: center; border: 1px solid #3f3f3f; background: linear-gradient(#b9b9b9, #6a6a6a); }
.logo svg { width: 18px; height: 22px; }
.logo .dark { width: 5px; height: 4px; fill: #333; }
.titlebar { display: flex; height: 17px; min-width: 0; background: linear-gradient(#989898, #686868); border-bottom: 1px solid #444; }
.qat { display: flex; align-items: center; padding-left: 4px; }
.qat button { width: 17px; }
.account button { width: 18px; }
.qat .arrow, .account .arrow { width: 9px; }
.arrow svg { width: 5px; height: 3px; }
.dim { opacity: .35; }
.flip { transform: scaleX(-1); }
.workspace { display: flex; align-items: center; gap: 3px; width: 131px; margin-left: 4px; padding: 0 3px; border: 1px solid #444; background: linear-gradient(#666, #515151); }
.tail { padding-left: 0; width: 48px; }
.caption { flex: 1; display: flex; align-items: center; justify-content: center; gap: 8px; min-width: 0; color: #20272e; font-size: 10px; white-space: nowrap; background: linear-gradient(90deg, #a6cfe9, #e6f4fb 12%, #f0f8fc 50%, #e6f4fb 85%, #a9d1ea); }
.expand { width: 10px; }
.expand svg { width: 4px; height: 6px; }
.search { width: 131px; padding: 0 3px; border: 1px solid #555; background: #737373; font-style: italic; }
.search::placeholder { color: #b9b9b9; opacity: 1; }
.account { display: flex; align-items: center; flex: none; padding-left: 4px; }
.account .login { width: 74px; justify-content: flex-start; gap: 4px; }
.account .help { width: 26px; }
.winctl { display: flex; justify-content: center; width: 89px; padding: 0 2px 4px 10px; background: linear-gradient(90deg, #b9dbf0, #eefaff 30%, #e3f6fd); }
.winctl button { width: 22px; border: 1px solid #b7c5d0; border-top: 0; background: #f5fbfe; }
.winctl button svg { width: 10px; height: 10px; }
.winctl .wide { width: 33px; }
.menubar { display: flex; align-items: center; gap: 18px; height: 16px; padding-left: 10px; background: linear-gradient(#8b8b8b, #575757); }
.docctl { display: flex; gap: 2px; margin: 0 2px 0 auto; }
.docctl svg { width: 11px; height: 11px; }

.tabs { display: flex; flex: none; height: 15px; padding-left: 4px; background: #464646; }
.tabs button { padding: 1px 7px 0; color: #c9c9c9; }
.tabs .on { border: 1px solid #767676; border-bottom: 0; background: linear-gradient(#737373, #5b5b5b); color: #fff; padding: 0 5px; }
.tabs .cam { margin-left: 8px; gap: 4px; }
.tabs .camera { width: 10px; height: 7px; }

.ribbon { display: grid; grid-template-columns: 154fr 166fr 116fr 183fr 72fr 148fr 50fr 55fr 56fr; flex: none; height: 73px; border-bottom: 2px solid #6d6d6d; background: #545454; }
.panel { display: flex; flex-direction: column; min-width: 0; border-right: 1px solid #414141; box-shadow: inset 1px 0 #626262; }
.panel h2 { display: flex; align-items: center; justify-content: center; gap: 6px; height: 14px; font-size: 9px; line-height: 12px; background: linear-gradient(#4b4b4b, #5a5a5a); white-space: nowrap; }
.panel h2 svg { width: 6px; height: 4px; }
.panel .launch { padding-left: 54px; justify-content: flex-start; }
.launch button { margin: 0 4px 0 auto; }
.panel .launch button svg { height: 6px; }
.body { flex: 1; display: grid; align-items: start; padding-top: 3px; }
.big { flex-direction: column; padding-top: 1px; line-height: 13px; }
.big > svg:first-child { width: 24px; height: 24px; margin-bottom: 2px; }
.big .mini { margin-top: 2px; }
.glyph { height: 22px; margin-bottom: 4px; font: 300 28px/22px Roboto, sans-serif; }
.rows { display: grid; grid-auto-rows: 17px; gap: 1px; min-width: 0; }
.tool { justify-content: flex-start; gap: 4px; }
.tool .mini { margin-left: 5px; }
.draw { grid-template-columns: 32px 28px 30px 32px 1fr; }
.draw .rows { padding-left: 5px; }
.draw .tool .mini { margin-left: 1px; }
.modify { grid-template-columns: 43px 43px 54px 1fr; padding-left: 6px; }
.note { grid-template-columns: 32px 30px 1fr; padding-left: 4px; }
.note .tool .mini { margin-left: 2px; }
.layer { grid-template-columns: 29px 1fr; padding: 3px 1px 0 1px; }
.layer .rows { padding-left: 1px; }
.combo { display: flex; align-items: center; gap: 3px; min-width: 0; flex: 1; padding: 0 3px 0 4px; border: 1px solid #373737; background: linear-gradient(#565656, #484848); box-shadow: 0 1px #686868; }
.layer .combo { gap: 2px; padding-left: 1px; }
.swatch { width: 10px; height: 10px; border: 1px solid #333; flex: none; }
.white { background: #fff; }
.teal { background: #007ba5; margin: 0 4px; border-color: #5c9aae; }
.strip { display: flex; gap: 5px; padding-left: 3px; }
.strip .text { gap: 3px; }
.block { grid-template-columns: 32px 1fr; }
.props { grid-template-columns: 30px 1fr; padding-right: 2px; }
.prop { display: flex; gap: 1px; align-items: center; }
.props .combo { align-self: stretch; }
.rule { flex: 1; height: 1px; background: #ddd; }
.props .fit { flex: none; width: 34px; margin-right: 6px; }
.grp { grid-template-columns: 31px 1fr; }
.grp .tool { width: 16px; justify-content: center; }
.grp .on { background: #4f6ca7; border: 1px solid #7792ca; }
.util { grid-template-columns: 36px 1fr; }

.files { display: flex; align-items: end; flex: none; height: 21px; padding-left: 14px; border-bottom: 3px solid #53575b; background: #383838; }
.file { height: 15px; border-radius: 6px 6px 0 0; background: #505050; color: #aeaeae; }
.start { width: 93px; padding-left: 9px; justify-content: flex-start; }
.files .on { justify-content: space-between; width: 89px; padding: 0 8px 0 6px; color: #fff; background: linear-gradient(#777, #565656); }
.file span { color: #444; }
.add { width: 17px; height: 11px; margin: 0 0 2px 5px; border-radius: 3px; font-weight: 700; font-size: 12px; }

.stage { flex: 1; display: flex; min-height: 0; }
.canvas { position: relative; flex: 1; min-width: 0; overflow: hidden; background: #212830; }
.drawing { position: absolute; inset: 0; width: 100%; height: 100%; }
.viewlabel { position: absolute; left: 2px; top: 4px; }
.cube { position: absolute; top: 5px; right: 8px; font-family: "Noto Sans CJK SC", sans-serif; }
.wcs { position: absolute; top: 88px; right: 27px; width: 35px; height: 13px; border: 1px solid #b2b5ba; border-radius: 3px; background: #90949b; font-size: 8px; color: #41474f; }
.wcs span { margin-left: 2px; color: #b0b4ba; }
.navbar { position: absolute; top: 119px; right: 3px; border: 1px solid #686d72; border-radius: 2px; background: #5b5f63; }
.navbar svg { width: 21px; }
.frameline { position: absolute; top: 0; bottom: 0; right: 4px; width: 1px; background: #a3a6aa; }
.edge { width: 6px; background: linear-gradient(90deg, #b8d5eb 0 4px, #154d63 4px 5px, #50bcca 5px); }
.command { position: absolute; left: 220px; right: 40px; bottom: 1px; display: flex; align-items: center; height: 18px; background: #4a4b4d; }
.command button { width: 16px; }
.grip { width: 4px; height: 14px; margin: 0 2px; background: repeating-linear-gradient(#888 0 1px, #444 1px 2px); }
.entry { flex: 1; display: flex; align-items: center; gap: 6px; align-self: stretch; padding-left: 4px; background: rgb(196 197 198 / .94); }
.entry input { flex: 1; min-width: 0; padding: 0; border: 0; background: none; color: #333; }
.entry input::placeholder { color: #6e7276; opacity: 1; font-style: italic; }

.bottom { display: flex; flex: none; height: 21px; background: #383838; }
.layouts { display: flex; align-items: start; gap: 2px; padding-left: 8px; }
.layouts button { height: 13px; width: 37px; clip-path: polygon(0 0, 100% 0, 86% 90%, 80% 100%, 20% 100%, 14% 90%); background: #535353; color: #aaa; }
.layouts .on { width: 34px; background: #777; color: #fff; font-weight: 700; }
.layouts .plus { width: 20px; font-size: 12px; font-weight: 700; }
.status { display: flex; margin-left: auto; padding-right: 1px; height: 20px; border-bottom: 1px solid #6c6c6c; background: #4a4a4a; }
.status button { width: 18px; }
.status button svg { width: 11px; height: 11px; }
.status .drop { width: 11px; }
.status .drop svg { width: 6px; height: 4px; }
.status .sep { border-left: 1px solid #646464; }
.status .far { width: 19px; }
.status .model { width: 23px; border: 1px solid #686868; color: #fff; font-weight: 700; }
.status .ratio { width: 30px; gap: 3px; }
.status .ratio svg { width: 5px; height: 3px; }
.blue { color: #2884f8; }
.gray { color: #b2b2b2; }

.taskbar { display: flex; align-items: end; flex: none; height: 6px; border-top: 1px solid #57799a; background: linear-gradient(90deg, #338ebe, #408ec2 20%, #3e91d4 32%, #1765aa 42%, #629cd2 44%, #1763a9 50%, #185091 75%, #123766); }
.orb { width: 22px; height: 5px; margin-left: 9px; border-radius: 10px 10px 0 0; background: #b3cbdc; }
.quick { margin: 0 8px 0 31px; }
.task { width: 43px; height: 5px; margin-right: 2px; padding: 1px 9px 0; border: 1px solid #d0e6f4; border-bottom: 0; background: #92bddd; }
.task b { display: block; height: 4px; border-radius: 4px 4px 0 0; }
.yellow { background: #f9bf27; }
.rose { background: #e6c8c8; }
.green { background: #16dc25; }
.clock { margin-left: auto; }

.brand { position: absolute; right: 39px; bottom: 19px; display: flex; align-items: center; gap: 8px; padding: 17px 6px 17px 7px; background: #202d58; color: #e3e4e7; }
.name { display: flex; align-items: center; gap: 2px; height: 36px; font: 500 28px/36px "Noto Sans CJK SC", sans-serif; }
.name b { font: 400 35px/36px Roboto, sans-serif; }
.site { height: 29px; font: 400 26px/29px Roboto, sans-serif; }
```
